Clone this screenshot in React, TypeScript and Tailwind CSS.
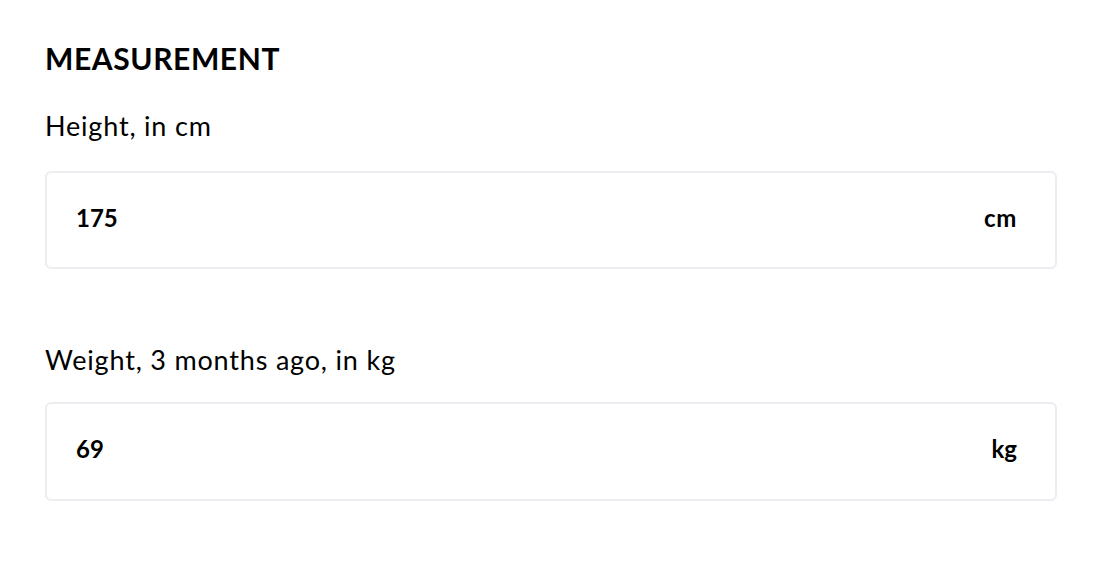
export default function App() {
  const font = { fontFamily: "Lato, 'Noto Sans', sans-serif" };
  return (
    <div className="w-[1102px] h-[588px] bg-white text-black px-[45px] pt-[38px]" style={font}>
      <h1 className="text-[30px] leading-[40px] font-bold tracking-[0.02em]">MEASUREMENT</h1>
      <div className="mt-[32px] text-[27px] leading-[32px] tracking-[0.03em]">Height, in cm</div>
      <div className="mt-[29px] h-[98px] w-[1012px] rounded-[6px] border-2 border-[#ebedf0] flex items-center justify-between pl-[29px] pr-[38px] pb-[5px]">
        <span className="text-[24px] font-bold">175</span>
        <span className="text-[24px] font-bold tracking-[0.03em]">cm</span>
      </div>
      <div className="mt-[75px] text-[27px] leading-[32px] tracking-[0.03em]">Weight, 3 months ago, in kg</div>
      <div className="mt-[26px] h-[99px] w-[1012px] rounded-[6px] border-2 border-[#ebedf0] flex items-center justify-between pl-[29px] pr-[38px] pb-[5px]">
        <span className="text-[24px] font-bold">69</span>
        <span className="text-[24px] font-bold">kg</span>
      </div>
    </div>
  );
}
